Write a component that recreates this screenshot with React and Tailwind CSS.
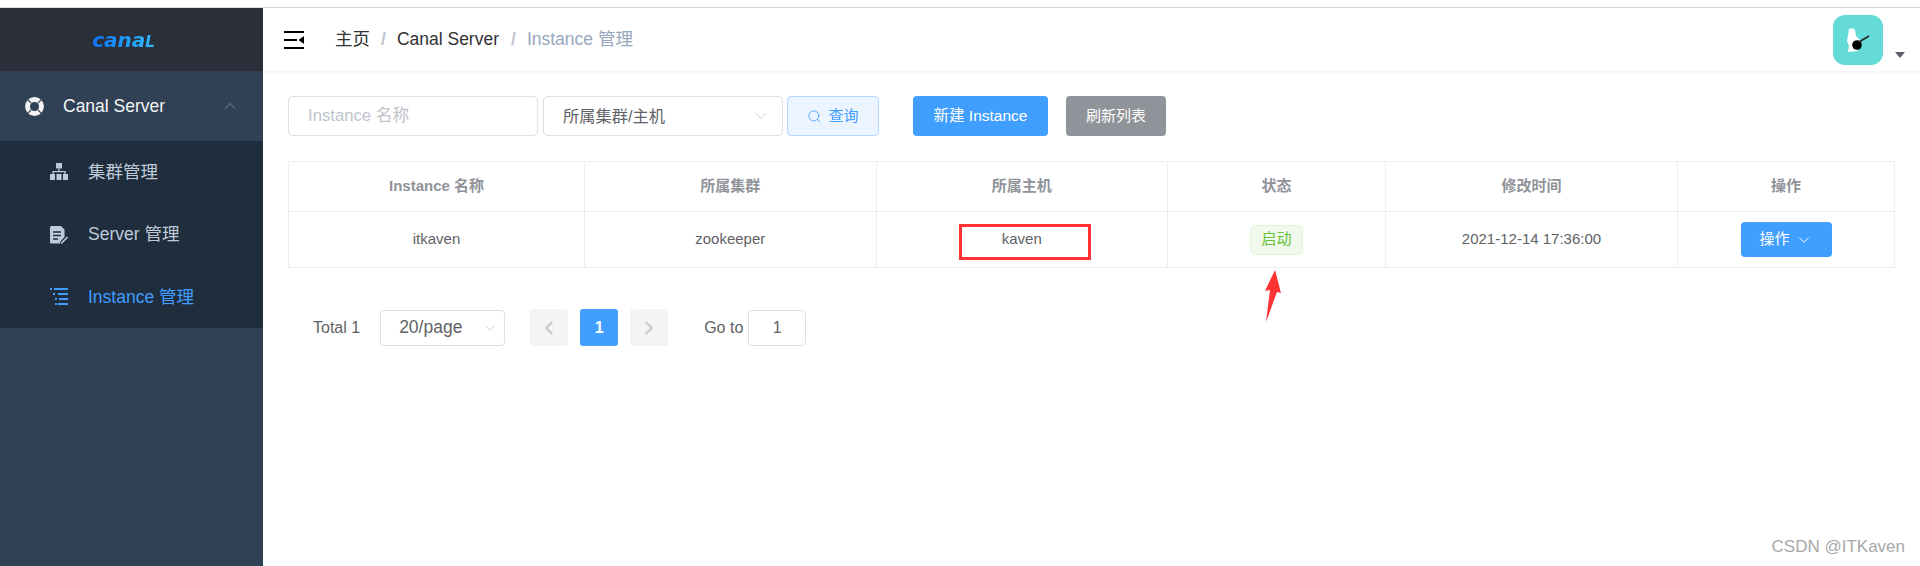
import { ChevronUp, ChevronDown, ChevronLeft, ChevronRight, Search } from 'lucide-react';

function RingIcon() {
  return (
    <svg width="19" height="19" viewBox="0 0 18 18" className="shrink-0">
      <circle cx="9" cy="9" r="6.6" fill="none" stroke="#f4f4f5" strokeWidth="4.6" />
      <path d="M2.5 2.5 L5.8 5.8 M15.5 2.5 L12.2 5.8 M2.5 15.5 L5.8 12.2 M15.5 15.5 L12.2 12.2" stroke="#304156" strokeWidth="1.3" />
    </svg>
  );
}

function TreeIcon() {
  return (
    <svg width="18" height="18" viewBox="0 0 18 18" fill="#bfcbd9" className="shrink-0">
      <rect x="6" y="0" width="6" height="5.5" />
      <rect x="8.4" y="5.5" width="1.2" height="3" />
      <rect x="2.5" y="8" width="13" height="1.2" />
      <rect x="2.5" y="8" width="1.2" height="3" />
      <rect x="14.3" y="8" width="1.2" height="3" />
      <rect x="0" y="11" width="5" height="6" />
      <rect x="6.5" y="11" width="5" height="6" />
      <rect x="13" y="11" width="5" height="6" />
    </svg>
  );
}

function DocIcon() {
  return (
    <svg width="18" height="18" viewBox="0 0 18 18" className="shrink-0">
      <path d="M1.5 0 H11 L14.5 3.5 V11 L10 16 V17.5 H1.5 A1.5 1.5 0 0 1 0 16 V1.5 A1.5 1.5 0 0 1 1.5 0 Z" fill="#bfcbd9" />
      <path d="M3 6 H11 M3 9.5 H11 M3 13 H8" stroke="#1f2d3d" strokeWidth="1.3" />
      <path d="M11 17.5 L17.5 11" stroke="#bfcbd9" strokeWidth="1.6" />
    </svg>
  );
}

function ListIcon() {
  return (
    <svg width="18" height="18" viewBox="0 0 18 18" fill="#409eff" className="shrink-0">
      <rect x="0" y="0" width="2" height="2" />
      <rect x="4" y="0" width="14" height="2" />
      <rect x="3" y="5" width="2" height="2" />
      <rect x="8" y="5" width="10" height="2" />
      <rect x="5" y="10" width="2" height="2" />
      <rect x="9" y="10" width="9" height="2" />
      <rect x="5" y="15" width="2" height="2" />
      <rect x="8" y="15" width="10" height="2" />
    </svg>
  );
}

function Hamburger() {
  return (
    <svg width="20" height="18" viewBox="0 0 20 18" fill="#000" className="shrink-0">
      <rect x="0" y="0" width="20" height="2" />
      <rect x="0" y="8" width="13" height="2" />
      <rect x="0" y="16" width="20" height="2" />
      <path d="M20 5 V13 L14.5 9 Z" />
    </svg>
  );
}

function Avatar() {
  return (
    <div className="w-[50px] h-[50px] rounded-[12px] bg-[#64dbd6] flex items-center justify-center">
      <svg width="50" height="50" viewBox="0 0 50 50">
        <path d="M16 14 Q20 12 22 15 L23 21 L27 25 L23 33 L25 36 L15 37 L16 31 L14 26 Z" fill="#fff" />
        <circle cx="24" cy="30" r="4.8" fill="#000" />
        <path d="M26 27 L36 21" stroke="#222" strokeWidth="1.5" />
      </svg>
    </div>
  );
}

function Th({ w, children }) {
  return <th style={{ width: w }} className="h-[50px] border border-[#ebeef5] text-[15px] font-bold text-[#909399] text-center p-0">{children}</th>;
}

function Td({ children }) {
  return <td className="h-[56px] border border-[#ebeef5] text-[15px] text-[#606266] text-center p-0">{children}</td>;
}

function MenuItem({ icon, label, active }) {
  return (
    <div className={`h-[62.4px] pl-[50px] flex items-center gap-[20px] text-[17.5px] ${active ? 'text-[#409eff]' : 'text-[#bfcbd9]'}`}>
      {icon}
      <span>{label}</span>
    </div>
  );
}

export default function App() {
  return (
    <div className="relative h-screen overflow-hidden bg-white flex flex-col font-['Liberation_Sans','Noto_Sans_CJK_SC',sans-serif]">
      <div className="h-[8px] shrink-0 border-b border-[#dcdcdc]" />
      <div className="flex flex-1 min-h-0">
        <aside className="w-[263px] shrink-0 bg-[#304156] flex flex-col">
          <div className="h-[63px] bg-[#2b2f3a] flex items-center justify-center">
            <span className="mr-[14px] italic font-bold text-[20px] leading-none font-['DejaVu_Sans',sans-serif] bg-gradient-to-r from-[#1273ff] to-[#38c0ff] bg-clip-text text-transparent pr-[2px]">
              cana<span className="text-[15px]">L</span>
            </span>
          </div>
          <div className="h-[70px] pl-[25px] pr-[23px] flex items-center text-[17.5px] text-[#f4f4f5]">
            <RingIcon />
            <span className="ml-[19px] flex-1">Canal Server</span>
            <ChevronUp size={20} strokeWidth={1} className="text-[#909399]" />
          </div>
          <div className="bg-[#1f2d3d]">
            <MenuItem icon={<TreeIcon />} label="集群管理" />
            <MenuItem icon={<DocIcon />} label="Server 管理" />
            <MenuItem icon={<ListIcon />} label="Instance 管理" active />
          </div>
        </aside>
        <div className="flex-1 min-w-0 flex flex-col">
          <header className="h-[63px] shrink-0 flex items-center pl-[21px] pr-[15px] shadow-[0_1px_5px_rgba(0,21,41,0.08)]">
            <Hamburger />
            <div className="ml-[31px] flex items-center text-[17.5px] text-[#303133]">
              <span>主页</span>
              <span className="mx-[11px] font-bold text-[#c0c4cc]">/</span>
              <span>Canal Server</span>
              <span className="ml-[12px] mr-[11px] font-bold text-[#c0c4cc]">/</span>
              <span className="text-[#97a8be]">Instance 管理</span>
            </div>
            <div className="ml-auto flex items-center">
              <Avatar />
              <span className="ml-[12px] mt-[31px] w-0 h-0 border-x-[5px] border-x-transparent border-t-[6px] border-t-[#5a5e66]" />
            </div>
          </header>
          <main className="pt-[25px] pl-[25px] pr-[26px]">
            <div className="flex items-stretch h-[40px] text-[16.25px]">
              <div className="w-[250px] rounded-[5px] border border-[#dcdfe6] pl-[19px] flex items-center text-[#c0c4cc] text-[16.7px]">Instance 名称</div>
              <div className="ml-[5px] w-[240px] rounded-[5px] border border-[#dcdfe6] pl-[19px] pr-[11px] flex items-center justify-between text-[#606266]">
                <span>所属集群/主机</span>
                <ChevronDown size={20} strokeWidth={1} className="text-[#c0c4cc]" />
              </div>
              <div className="ml-[4px] w-[92px] rounded-[4px] border border-[#b3d8ff] bg-[#ecf5ff] text-[#409eff] text-[15px] flex items-center justify-center gap-[6px]">
                <Search size={15} strokeWidth={1.3} />
                <span>查询</span>
              </div>
              <div className="ml-[34px] w-[135px] rounded-[4px] bg-[#409eff] text-white text-[15.5px] flex items-center justify-center">新建 Instance</div>
              <div className="ml-[18px] w-[100px] rounded-[4px] bg-[#909399] text-white text-[15px] flex items-center justify-center">刷新列表</div>
            </div>
            <table className="mt-[25px] w-[1606px] table-fixed border-collapse">
              <thead>
                <tr>
                  <Th w="296px">Instance 名称</Th>
                  <Th w="291.5px">所属集群</Th>
                  <Th w="291.5px">所属主机</Th>
                  <Th w="218px">状态</Th>
                  <Th w="292px">修改时间</Th>
                  <Th w="217px">操作</Th>
                </tr>
              </thead>
              <tbody>
                <tr>
                  <Td>itkaven</Td>
                  <Td>zookeeper</Td>
                  <Td>kaven</Td>
                  <Td>
                    <span className="inline-flex items-center justify-center w-[53px] h-[30px] rounded-[5px] border border-[#e1f3d8] bg-[#f0f9eb] text-[#67c23a]">启动</span>
                  </Td>
                  <Td>2021-12-14 17:36:00</Td>
                  <Td>
                    <span className="inline-flex items-center justify-center gap-[5px] w-[91px] h-[35px] rounded-[4px] bg-[#409eff] text-white">
                      操作
                      <ChevronDown size={18} strokeWidth={1.2} />
                    </span>
                  </Td>
                </tr>
              </tbody>
            </table>
            <div className="mt-[41px] pl-[25px] h-[37px] flex items-center text-[16px] text-[#606266]">
              <span>Total 1</span>
              <div className="ml-[20px] w-[125px] h-[36px] rounded-[4px] border border-[#dcdfe6] pl-[18px] pr-[5px] flex items-center justify-between">
                <span className="text-[17.5px]">20/page</span>
                <ChevronDown size={18} strokeWidth={1} className="text-[#c0c4cc]" />
              </div>
              <div className="ml-[25px] w-[38px] h-[37px] rounded-[3px] bg-[#f4f4f5] flex items-center justify-center text-[#c0c4cc]">
                <ChevronLeft size={22} strokeWidth={2} />
              </div>
              <div className="ml-[12px] w-[38px] h-[37px] rounded-[3px] bg-[#409eff] flex items-center justify-center text-white font-bold">1</div>
              <div className="ml-[12px] w-[38px] h-[37px] rounded-[3px] bg-[#f4f4f5] flex items-center justify-center text-[#c0c4cc]">
                <ChevronRight size={22} strokeWidth={2} />
              </div>
              <span className="ml-[36px]">Go to</span>
              <div className="ml-[5px] w-[58px] h-[36px] rounded-[4px] border border-[#dcdfe6] flex items-center justify-center">1</div>
            </div>
          </main>
        </div>
      </div>

      {/* annotations drawn on top of the screenshot */}
      <div className="absolute left-[959px] top-[224px] w-[132px] h-[36px] border-[3px] border-[#ff3333]" />
      <svg className="absolute left-[1260px] top-[268px]" width="26" height="56" viewBox="0 0 26 56">
        <path d="M15 2 L21 25 L17 24 L6 54 L10 22 L5 23 Z" fill="#ff3333" />
      </svg>
      <div className="absolute right-[15px] bottom-[7px] text-[17px] text-[#a8a8a8]">CSDN @ITKaven</div>
    </div>
  );
}
